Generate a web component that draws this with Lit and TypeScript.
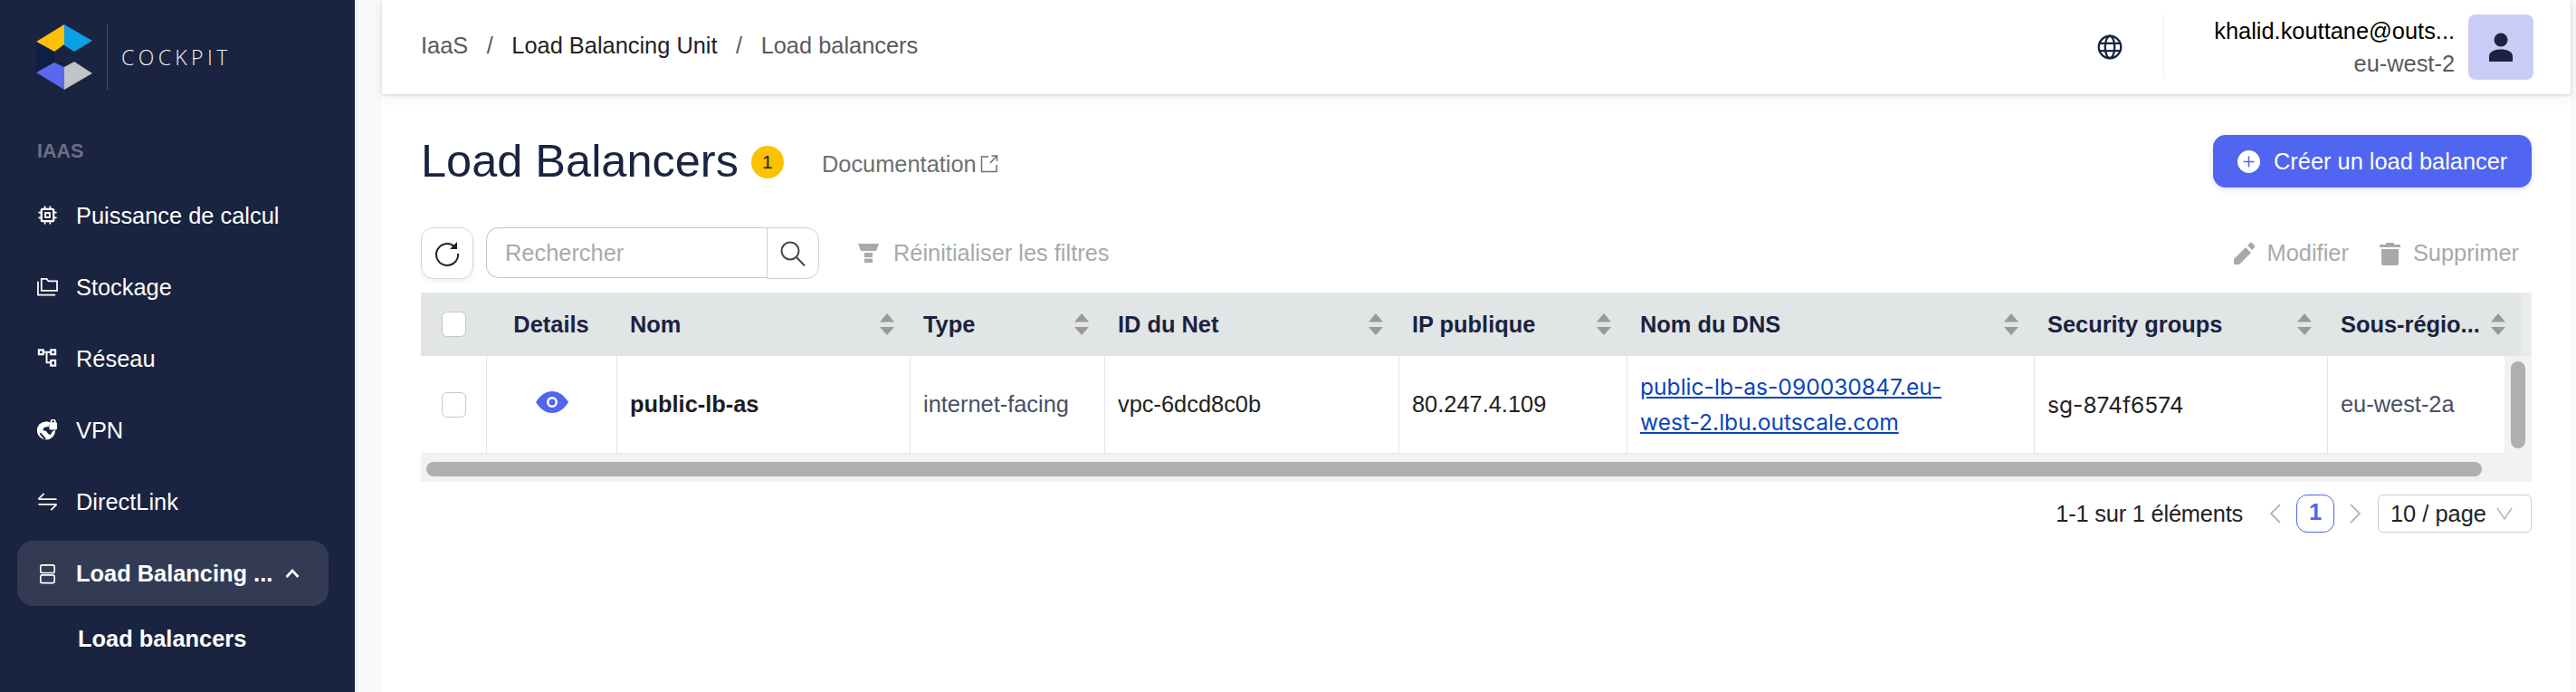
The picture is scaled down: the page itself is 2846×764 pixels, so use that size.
import { LitElement, html, css, svg } from "lit";
import { customElement } from "lit/decorators.js";

const ICONS: Record<string, unknown> = {
  chip: svg`<svg class="nav-ic" viewBox="0 0 24 24" fill="none" stroke="#fff" stroke-width="2.400"><rect x="5" y="5" width="14" height="14" rx="1.500"/><rect x="9.500" y="9.500" width="5" height="5" stroke-width="2"/><path d="M9 1.500V5M15 1.500V5M9 19v3.500M15 19v3.500M1.500 9H5M1.500 15H5M19 9h3.500M19 15h3.500" stroke-width="1.800"/></svg>`,
  folder: svg`<svg class="nav-ic" viewBox="0 0 24 24" fill="none" stroke="#fff" stroke-width="1.800"><path d="M5 16.500V3h6l2 2.500h10v11z"/><path d="M1 6v15.500h20"/></svg>`,
  net: svg`<svg class="nav-ic" viewBox="0 0 24 24" fill="none" stroke="#fff" stroke-width="2.300"><rect x="2" y="2.500" width="5" height="5"/><rect x="16" y="2.500" width="5" height="5"/><rect x="16" y="14.500" width="5" height="6"/><path d="M7 5h9M11 5v12h5" stroke-width="2"/></svg>`,
  vpn: svg`<svg class="nav-ic" viewBox="0 0 24 24"><circle cx="10.500" cy="13" r="10.500" fill="#fff"/><path fill="#1a2340" d="M8 9.500l5.500-1.500 2-6 8 0v9l-6 3-2 4-3-1.500-2-3-4-1z"/><path fill="none" stroke="#1a2340" stroke-width="2.200" d="M3.500 16l6 7"/><circle cx="10.500" cy="13" r="9.500" fill="none" stroke="#fff" stroke-width="2" stroke-dasharray="30 60" stroke-dashoffset="-24"/><rect x="14" y="3.500" width="9" height="8.500" rx="1.500" fill="#fff"/><path fill="none" stroke="#fff" stroke-width="1.800" d="M16.200 4V2.800a2.300 2.300 0 0 1 4.600 0V4"/></svg>`,
  link: svg`<svg class="nav-ic" viewBox="0 0 24 24" fill="none" stroke="#fff" stroke-width="1.900"><path d="M1.500 9.500h21M1.500 9.500 8 3M22.500 15.500h-21M22.500 15.500 16 22"/></svg>`,
  lb: svg`<svg class="nav-ic" viewBox="0 0 24 24" fill="none" stroke="#fff" stroke-width="1.700"><rect x="4" y="2" width="16" height="9" rx="2"/><rect x="4" y="13.500" width="16" height="9" rx="2"/></svg>`,
};

const COLS = ["Nom", "Type", "ID du Net", "IP publique", "Nom du DNS", "Security groups", "Sous-régio..."];

@customElement("app-root")
export class AppRoot extends LitElement {
  static styles = css`
    :host { display: block; height: 764px; overflow: hidden; font-family: "Liberation Sans", Arial, sans-serif; font-size: 25.400px; color: #222; background: #f8f9fa; }
    * { box-sizing: border-box; }
    .root { display: flex; height: 764px; }
    .side { width: 392px; flex: none; background: #1a2340; color: #fff; }
    .logo { display: flex; align-items: center; padding: 27px 0 0 40px; height: 99px; }
    .logo svg { display: block; width: 62px; height: 72px; }
    .logo-div { width: 1px; height: 72px; background: #4a5169; margin-left: 16px; }
    .logo-text { font-family: "Open Sans", sans-serif; font-weight: 300; font-size: 23px; letter-spacing: 4.400px; margin-left: 15px; color: #f2f3f5; }
    .sec { margin: 53px 0 0 41px; font-size: 21.500px; font-weight: 700; color: #6a7186; line-height: 30px; height: 30px; }
    .nav { padding-top: 16px; }
    .item { display: flex; align-items: center; height: 79px; padding-left: 41px; line-height: 30px; }
    .nav-ic { width: 23px; height: 23px; flex: none; margin-right: 20px; }
    .item.active { height: 72px; margin: 4px 29px 0 19px; padding-left: 22px; border-radius: 18px; background: #333b54; font-weight: 700; }
    .item.active svg.chev { margin-left: 14px; width: 16px; height: 12px; }
    .sub { padding: 21px 0 0 86px; font-weight: 700; line-height: 30px; }
    .gut { width: 30px; flex: none; border-left: 3px solid #edf0f3; background: #f9f9f9; }
    .main { flex: 1; min-width: 0; background: #fff; display: flex; flex-direction: column; margin-right: 6px; }
    .top { height: 104px; flex: none; display: flex; align-items: center; padding: 0 41px 0 43px; box-shadow: 0 1px 3px rgba(0,0,0,.16), 0 4px 16px rgba(0,0,0,.06); }
    .crumb { display: flex; align-items: center; gap: 20.500px; color: #5a5a5a; flex: 1; padding-bottom: 4px; }
    .crumb .cur { color: #222; }
    .globe { width: 28px; height: 28px; margin-right: 45px; }
    .top-div { width: 1px; height: 72px; background: #f0f0f0; }
    .user { width: 336px; text-align: right; line-height: 36px; padding-right: 15px; }
    .user .mail { color: #000; white-space: nowrap; }
    .user .reg { color: #5a5a5a; }
    .avatar { width: 72px; height: 72px; background: #c9cdf5; border-radius: 8px; display: flex; align-items: center; justify-content: center; }
    .avatar svg { width: 30px; height: 32px; }
    .content { padding: 45px 43px 0 43px; flex: 1; }
    .title-row { display: flex; align-items: center; height: 58px; }
    h1 { margin: 0; font-size: 50.500px; font-weight: 400; color: #1a2340; line-height: 58px; }
    .badge { width: 36px; height: 36px; border-radius: 50%; background: #fcc200; color: #222; display: flex; align-items: center; justify-content: center; margin: 2px 0 0 14px; font-size: 21px; }
    .doc { margin-left: 42px; color: #6f6f6f; display: flex; align-items: center; gap: 4px; padding-top: 6px; }
    .doc svg { width: 20px; height: 20px; }
    .create { margin-left: auto; width: 352px; height: 58px; border-radius: 14px; background: #5065f0; color: #fff; display: flex; align-items: center; padding-left: 27px; gap: 15px; box-shadow: 0 2px 6px rgba(80,101,240,.2); }
    .create svg { width: 25px; height: 25px; }
    .tools { display: flex; align-items: flex-start; height: 57px; margin-top: 44px; }
    .refresh { width: 58px; height: 57px; border: 1px solid #d6d6d6; border-radius: 14px; display: flex; align-items: center; justify-content: center; box-shadow: 0 3px 5px rgba(0,0,0,.06); }
    .refresh svg { width: 30px; height: 30px; }
    .search { display: flex; margin-left: 14px; }
    .input { width: 310px; height: 56px; border: 1px solid #c6c6c6; border-right: 0; border-radius: 14px 0 0 14px; color: #a9a9a9; display: flex; align-items: center; padding-left: 20px; }
    .sbtn { width: 58px; height: 57px; border: 1px solid #cfcfcf; border-radius: 0 14px 14px 0; display: flex; align-items: center; justify-content: center; }
    .sbtn svg { width: 28px; height: 28px; }
    .filter { margin-left: 43px; display: flex; align-items: center; height: 57px; color: #a9a9a9; gap: 16px; }
    .filter svg { width: 23px; height: 21px; }
    .acts { margin-left: auto; display: flex; align-items: center; height: 57px; color: #a9a9a9; padding-right: 14px; }
    .acts svg { width: 23px; height: 26px; margin-right: 14px; }
    .acts .del { margin-left: 34px; }
    .table { margin-top: 15px; background: #f1f2f2; }
    .thead { display: flex; height: 70px; }
    .thead .grid { background: #e2e5e6; flex: none; }
    .band { flex: 1; background: #e9ebec; }
    .grid { display: grid; grid-template-columns: 72px 144px 324px 215px 325px 252px 450px 324px 214px; }
    .th { display: flex; align-items: center; justify-content: space-between; padding: 0 17px 0 15px; font-weight: 700; color: #1a2340; height: 70px; white-space: nowrap; }
    .th.c { justify-content: center; padding: 0; }
    .sort { width: 16px; height: 24px; }
    .cb { width: 27px; height: 28px; background: #fff; border: 1px solid #c6c6c6; border-radius: 6px; }
    .tbody { display: flex; height: 108px; }
    .tbody .grid { grid-template-columns: 72px 144px 324px 215px 325px 252px 450px 324px 196px; background: #fff; flex: none; border-bottom: 1px solid #e6e8ea; }
    .td { height: 107px; display: flex; align-items: center; padding: 0 14px; border-left: 1px solid #e4e6e8; white-space: nowrap; }
    .td:first-child { border-left: 0; justify-content: center; }
    .td.c { justify-content: center; padding: 0; }
    .td.name { font-weight: 700; color: #1d1d22; }
    .td.muted { color: #4b4f66; }
    .td.inter { font-family: Inter, "Liberation Sans", sans-serif; font-size: 24.600px; }
    .eye { width: 36px; height: 24px; margin-bottom: 6px; }
    .dns { color: #0a45bb; text-decoration: underline; line-height: 39px; }
    .vtrack { flex: 1; display: flex; justify-content: center; padding-top: 6px; }
    .vthumb { width: 16px; height: 96px; border-radius: 8px; background: #aeafb1; }
    .htrack { height: 31px; padding: 9px 0 0 6px; }
    .hthumb { width: 2271px; height: 16px; border-radius: 8px; background: #aeafb1; }
    .pager { display: flex; justify-content: flex-end; align-items: center; margin-top: 14px; height: 42px; }
    .pager svg.ch { width: 14px; height: 24px; }
    .num { width: 42px; height: 42px; border: 1px solid #5065f0; border-radius: 12px; color: #5065f0; font-weight: 700; display: flex; align-items: center; justify-content: center; margin: 0 16px 0 16px; padding-bottom: 3px; }
    .total { margin-right: 29px; letter-spacing: -0.200px; }
    .sel { width: 170px; height: 42px; border: 1px solid #cfcfcf; border-radius: 6px; margin-left: 18px; display: flex; align-items: center; padding-left: 13px; gap: 11px; }
    .sel svg { width: 18px; height: 14px; }
  `;

  private nav(ic: string, label: string) {
    return html`<div class="item">${ICONS[ic]}<span>${label}</span></div>`;
  }

  private sortIcon() {
    return html`<svg class="sort" viewBox="0 0 16 24"><path fill="#999" d="M8 0l8 9.500H0zM8 24 0 15h16z"/></svg>`;
  }

  render() {
    return html`<div class="root">
      <aside class="side">
        <div class="logo">
          <svg viewBox="40 27 62 72">
            <path fill="#ffc107" d="M40 46 71 27v22L60 57z"/>
            <path fill="#0ba0e3" d="M71 27l31 18-20 12-11-7z"/>
            <path fill="#0d1f45" d="M40 46l20 11v11L40 80z"/>
            <path fill="#5a68f0" d="M40 80l20-11 11 5v25z"/>
            <path fill="#c2c3c6" d="M71 74l11-6 20 13-31 18z"/>
          </svg>
          <div class="logo-div"></div>
          <div class="logo-text">COCKPIT</div>
        </div>
        <div class="sec">IAAS</div>
        <div class="nav">
          ${this.nav("chip", "Puissance de calcul")}
          ${this.nav("folder", "Stockage")}
          ${this.nav("net", "Réseau")}
          ${this.nav("vpn", "VPN")}
          ${this.nav("link", "DirectLink")}
          <div class="item active">${ICONS.lb}<span>Load Balancing ...</span>
            <svg class="chev" viewBox="0 0 16 12" fill="none" stroke="#fff" stroke-width="2.600"><path d="M1.500 10 8 3l6.500 7"/></svg>
          </div>
          <div class="sub">Load balancers</div>
        </div>
      </aside>
      <div class="gut"></div>
      <main class="main">
        <header class="top">
          <div class="crumb"><span>IaaS</span><span>/</span><span class="cur">Load Balancing Unit</span><span>/</span><span>Load balancers</span></div>
          <svg class="globe" viewBox="0 0 24 24" fill="none" stroke="#1a2340" stroke-width="2"><circle cx="12" cy="12" r="10.500"/><ellipse cx="12" cy="12" rx="4.500" ry="10.500"/><path d="M2 8.500h20M2 15.500h20"/></svg>
          <div class="top-div"></div>
          <div class="user"><div class="mail">khalid.kouttane@outs...</div><div class="reg">eu-west-2</div></div>
          <div class="avatar"><svg viewBox="0 0 30 32"><circle cx="15" cy="8" r="7.500" fill="#1a2340"/><path fill="#1a2340" d="M2 32v-6c0-5 6-7.500 13-7.500S28 21 28 26v6z"/></svg></div>
        </header>
        <div class="content">
          <div class="title-row">
            <h1>Load Balancers</h1>
            <div class="badge">1</div>
            <div class="doc">Documentation<svg viewBox="0 0 20 20" fill="none" stroke="#6f6f6f" stroke-width="1.500"><path d="M9 2H1.500v16.500H18V11M11 9l7.500-8M12.500 1h6v6"/></svg></div>
            <div class="create"><svg viewBox="0 0 25 25"><circle cx="12.500" cy="12.500" r="12.500" fill="#fff"/><path d="M12.500 6.500v12M6.500 12.500h12" stroke="#5065f0" stroke-width="1.500"/></svg><span>Créer un load balancer</span></div>
          </div>
          <div class="tools">
            <div class="refresh"><svg viewBox="0 0 30 30" fill="none" stroke="#222" stroke-width="2"><path d="M23.500 7.500A12 12 0 1 0 27 15"/><path fill="#222" stroke="none" d="M26 2v8h-8z"/></svg></div>
            <div class="search">
              <div class="input">Rechercher</div>
              <div class="sbtn"><svg viewBox="0 0 28 28" fill="none" stroke="#444" stroke-width="2"><circle cx="11" cy="11" r="9.500"/><path d="M18 18l9 9.500"/></svg></div>
            </div>
            <div class="filter"><svg viewBox="0 0 23 21"><path fill="#a9a9a9" d="M0 0h23l-3 8H3zM7 10h9v5H7zM7 16.500h9V21H7z"/></svg><span>Réinitialiser les filtres</span></div>
            <div class="acts">
              <svg viewBox="0 0 23 26"><path fill="#a9a9a9" d="M0 25v-6L13 6l6 6L6 25zM15 4l3-3q1-1 2 0l3 3q1 1 0 2l-3 3z"/></svg><span>Modifier</span>
              <svg class="del" viewBox="0 0 23 26"><path fill="#a9a9a9" d="M2 8h19v16q0 2-2 2H4q-2 0-2-2zM0 3h7V1h9v2h7v3H0z"/></svg><span>Supprimer</span>
            </div>
          </div>
          <div class="table">
            <div class="thead">
              <div class="grid">
                <div class="th c"><div class="cb"></div></div>
                <div class="th c">Details</div>
                ${COLS.map((c) => html`<div class="th"><span>${c}</span>${this.sortIcon()}</div>`)}
              </div>
              <div class="band"></div>
            </div>
            <div class="tbody">
              <div class="grid">
                <div class="td"><div class="cb"></div></div>
                <div class="td c"><svg class="eye" viewBox="0 0 36 24"><path fill="#5065f0" d="M0 12C5 4 11 0 18 0s13 4 18 12c-5 8-11 12-18 12S5 20 0 12z"/><circle cx="18" cy="12" r="6" fill="#fff"/><circle cx="18" cy="12" r="3.500" fill="#5065f0"/></svg></div>
                <div class="td name">public-lb-as</div>
                <div class="td muted">internet-facing</div>
                <div class="td">vpc-6dcd8c0b</div>
                <div class="td">80.247.4.109</div>
                <div class="td inter"><span class="dns">public-lb-as-090030847.eu-<br />west-2.lbu.outscale.com</span></div>
                <div class="td inter">sg-874f6574</div>
                <div class="td muted">eu-west-2a</div>
              </div>
              <div class="vtrack"><div class="vthumb"></div></div>
            </div>
            <div class="htrack"><div class="hthumb"></div></div>
          </div>
          <div class="pager">
            <span class="total">1-1 sur 1 éléments</span>
            <svg class="ch" viewBox="0 0 14 24" fill="none" stroke="#b5b5b5" stroke-width="1.800"><path d="M12 2 2 12l10 10"/></svg>
            <div class="num">1</div>
            <svg class="ch" viewBox="0 0 14 24" fill="none" stroke="#b5b5b5" stroke-width="1.800"><path d="M2 2l10 10L2 22"/></svg>
            <div class="sel"><span>10 / page</span><svg viewBox="0 0 18 14" fill="none" stroke="#b5b5b5" stroke-width="1.500"><path d="M1 1l8 12 8-12"/></svg></div>
          </div>
        </div>
      </main>
    </div>`;
  }
}
